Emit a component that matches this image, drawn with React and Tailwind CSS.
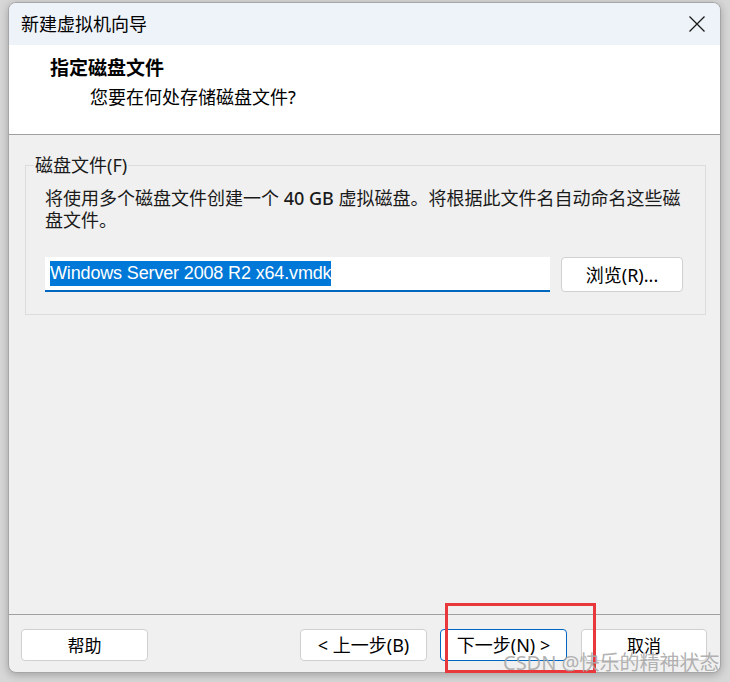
import React from 'react';

const FONT = "font-['Noto_Sans','Noto_Sans_CJK_SC',sans-serif]";

function WizButton({ children, primary, className = '' }) {
  return (
    <button
      className={`h-[32px] rounded-[4px] bg-white leading-none text-black flex items-center justify-center ${
        primary ? 'border border-[#0067c0]' : 'border border-[#d0d0d0]'
      } ${className}`}>
      {children}
    </button>
  );
}

export default function App() {
  return (
    <div className={`relative w-[730px] h-[682px] overflow-hidden bg-[#d7d7d7] pt-[2px] pl-[8px] ${FONT}`}>
      {/* Dialog window */}
      <div className="w-[713px] h-[671px] flex flex-col overflow-hidden rounded-[8px] border border-[#a6a6a6] bg-[#f0f0f0] shadow-[0_2px_8px_rgba(0,0,0,0.25)]">
        {/* Title bar */}
        <div className="h-[42px] shrink-0 bg-[#eef3f9] flex items-center pl-[12px] pr-[14px]">
          <span className="text-[18px] text-black">新建虚拟机向导</span>
          <svg className="ml-auto" width="18" height="18" viewBox="0 0 18 18">
            <path d="M1.5 1.5 L16.5 16.5 M16.5 1.5 L1.5 16.5" stroke="#1a1a1a" strokeWidth="1.3" fill="none" />
          </svg>
        </div>

        {/* Header */}
        <div className="h-[90px] shrink-0 bg-white border-b border-[#a0a0a0] pt-[11px]">
          <p className="pl-[41px] text-[19px] leading-[24px] font-bold text-black">指定磁盘文件</p>
          <p className="pl-[81px] mt-[5px] text-[18px] leading-[24px] text-black">您要在何处存储磁盘文件?</p>
        </div>

        {/* Content */}
        <div className="flex-1 pt-[18px] pl-[16px] pr-[14px]">
          <fieldset className="border border-[#dcdcdc] pb-[22px]">
            <legend className="ml-[8px] px-[1px] text-[18px] leading-[24px] text-[#1a1a1a]">磁盘文件(F)</legend>
            <p className="ml-[19px] mt-[10px] text-[18px] leading-[22px] text-[#1a1a1a] whitespace-nowrap">
              将使用多个磁盘文件创建一个 <span className="font-medium">40 GB</span> 虚拟磁盘。将根据此文件名自动命名这些磁
              <br />
              盘文件。
            </p>
            <div className="ml-[19px] mr-[21px] mt-[26px] flex gap-[11px]">
              <div className="w-[505px] h-[35px] bg-white border-b-2 border-[#0067c0] flex items-center pl-[5px]">
                <span className="bg-[#0078d7] text-white text-[18px] leading-[25px] font-['Liberation_Sans',sans-serif] tracking-[-0.15px]">
                  Windows Server 2008 R2 x64.vmdk
                </span>
              </div>
              <WizButton className="w-[122px] h-[35px] text-[18px]">浏览(R)...</WizButton>
            </div>
          </fieldset>
        </div>

        {/* Bottom buttons */}
        <div className="h-[58px] shrink-0 border-t border-[#a0a0a0] flex pt-[14px] pl-[12px] pr-[13px]">
          <WizButton className="w-[127px] text-[17px]">帮助</WizButton>
          <div className="ml-auto flex gap-[13px]">
            <WizButton className="w-[127px] text-[18px]">&lt;&nbsp;上一步(B)</WizButton>
            <WizButton primary className="w-[127px] text-[18px]">下一步(N)&nbsp;&gt;</WizButton>
            <WizButton className="w-[126px] ml-[1px] text-[17px]">取消</WizButton>
          </div>
        </div>
      </div>

      {/* Red highlight annotation */}
      <div className="absolute left-[445px] top-[603px] w-[151px] h-[70px] border-[3px] border-[#e8383b] pointer-events-none" />

      {/* Watermark */}
      <span className="absolute left-[503px] top-[650px] text-[20px] leading-[26px] text-[#a9a9a9]/90 pointer-events-none whitespace-nowrap">
        CSDN @快乐的精神状态
      </span>
    </div>
  );
}
